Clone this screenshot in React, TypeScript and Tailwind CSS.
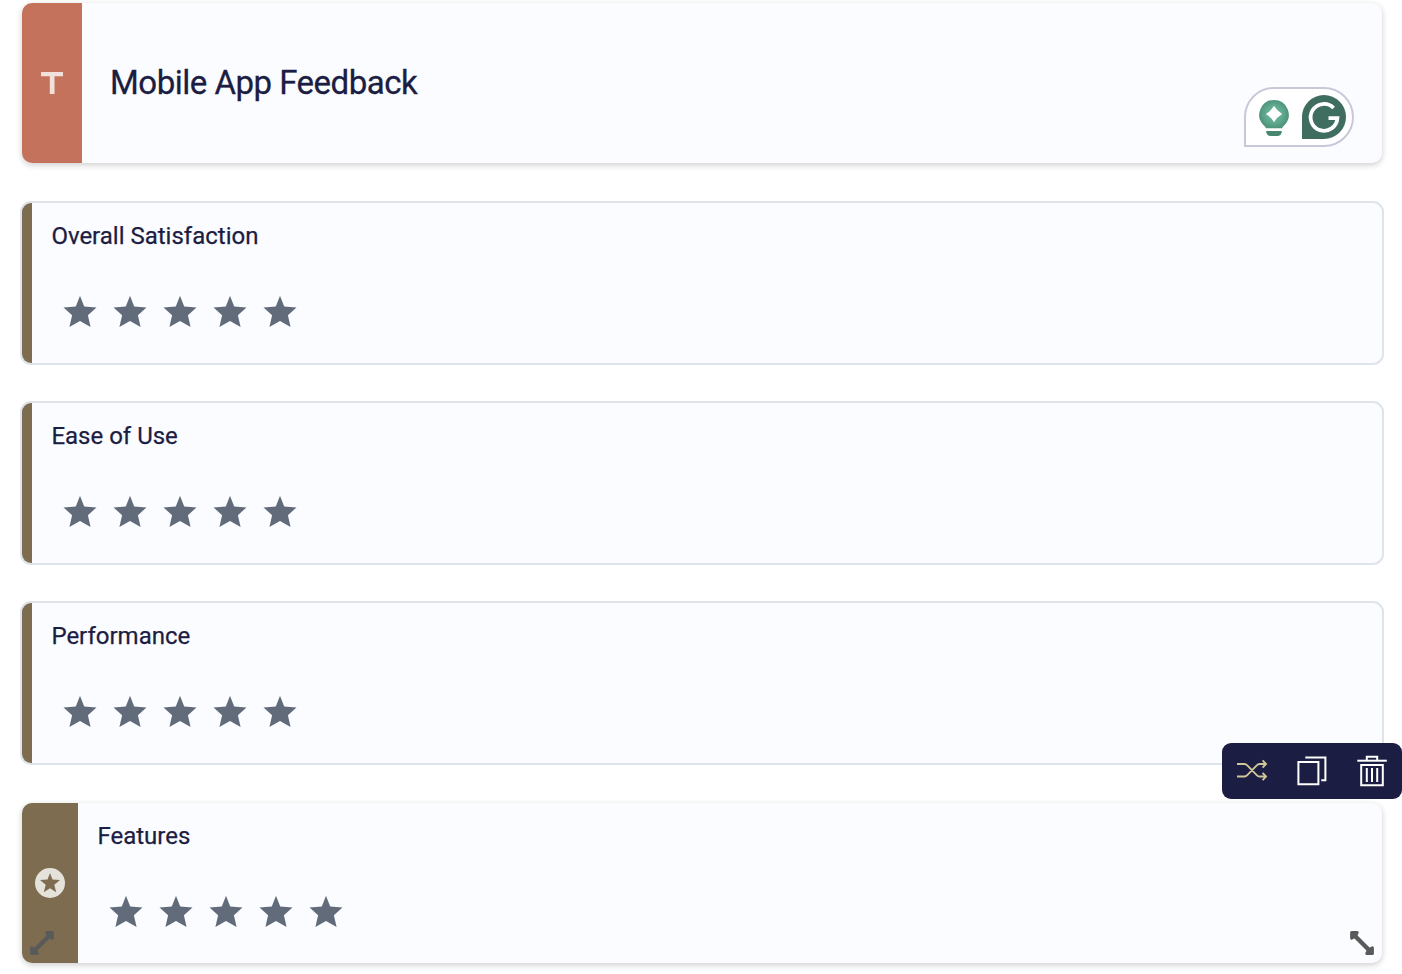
const fontStack = 'font-[Roboto,sans-serif]';

function Star() {
  return (
    <svg className="w-[34px] h-8" viewBox="0 0 34 32" fill="#616b7a">
      <path d="M17 -0.2 L21.2 10.6 L33.5 11.4 L24.9 19.3 L27.6 31 L17 24.9 L6.4 31 L9.1 19.3 L0.5 11.4 L12.8 10.6 Z" />
    </svg>
  );
}

function Stars() {
  return (
    <div className="flex gap-4">
      {[1, 2, 3, 4, 5].map((n) => (
        <Star key={n} />
      ))}
    </div>
  );
}

function Question({ label }: { label: string }) {
  return (
    <div className="pl-[19px] pt-[17px]">
      <p className="pl-[0.4px] text-2xl leading-8 text-[#1c1d42] [-webkit-text-stroke:0.25px_#1c1d42]">{label}</p>
      <div className="mt-11 ml-3">
        <Stars />
      </div>
    </div>
  );
}

function RatingCard({ label }: { label: string }) {
  return (
    <div className="h-[164px] w-[1364px] flex border-2 border-[#dfe3ea] rounded-[11px] bg-[#fbfcff] overflow-hidden">
      <div className="w-2.5 bg-[#7e6c50]" />
      <Question label={label} />
    </div>
  );
}

function AssistantBadge() {
  return (
    <div className="absolute left-[1222px] top-[84px] w-[110px] h-[60px] rounded-[30px] rounded-bl-none border-2 border-[#c9c8d8] bg-white">
      <svg className="w-full h-full" viewBox="0 0 106 56" fill="none">
        <defs>
          <radialGradient id="bulb" cx="50%" cy="50%" r="50%">
            <stop offset="0" stopColor="#6bbda0" />
            <stop offset="0.6" stopColor="#60aa8f" />
            <stop offset="1" stopColor="#4f947b" />
          </radialGradient>
        </defs>
        <path d="M28 11 A14.7 14.7 0 0 1 38.6 35.9 Q36.4 37.6 36 39.2 H20 Q19.6 37.6 17.4 35.9 A14.7 14.7 0 0 1 28 11 Z" fill="url(#bulb)" />
        <path d="M20.3 42 h15.4 v1.2 q-0.8 3.8 -4.2 3.8 h-7 q-3.4 0 -4.2 -3.8 Z" fill="#48866f" />
        <path d="M28 16.8 Q31 22 36.2 25 Q31 28 28 33.2 Q25 28 19.8 25 Q25 22 28 16.8 Z" fill="#fff" />
        <path d="M78 6 a22 22 0 0 1 0 44 H56 V28 A22 22 0 0 1 78 6 Z" fill="#3f6d60" />
        <path d="M87.6 19 A13.4 13.4 0 1 0 91.4 29.2 H82.5" stroke="#fff" strokeWidth="3.8" />
      </svg>
    </div>
  );
}

function Toolbar() {
  return (
    <div className="absolute left-[1222px] top-[743px] w-[180px] h-14 rounded-[9px] bg-[#1c1d42] flex items-center">
      <svg className="w-[60px] h-14" viewBox="0 0 60 56" fill="none" stroke="#cfc69a" strokeWidth="1.9">
        <path d="M15 21 H22.5 Q24 21.2 25 22.2 L35 32.3 Q36 33.4 37.5 33.5 H44 M15 33.5 H22.5 Q24 33.3 25 32.3 L35 22.2 Q36 21.1 37.5 21 H44" />
        <path d="M40.6 17.4 L44 21 L40.6 24.6 M40.6 29.9 L44 33.5 L40.6 37.1" />
      </svg>
      <svg className="w-[60px] h-14" viewBox="0 0 60 56" fill="none" stroke="#fff" strokeWidth="2">
        <path d="M16.4 19 H36.4 V41.2 H16.4 Z" />
        <path d="M23.3 14.6 H43.4 V37.2 H39.3" />
      </svg>
      <svg className="w-[60px] h-14" viewBox="0 0 60 56" fill="none" stroke="#fff" strokeWidth="2">
        <path d="M15.3 17.7 H44.8" />
        <path d="M24.8 17.5 V13.7 H35.2 V17.5" />
        <path d="M19.2 22 H40.8 V42.2 H19.2 Z" />
        <path d="M24.8 25 V39 M30 25 V39 M35.2 25 V39" />
      </svg>
    </div>
  );
}

function ResizeHandle({ className }: { className?: string }) {
  return (
    <svg className={className} width="24" height="24" viewBox="0 0 24 24" fill="#5a5a5a" stroke="#5a5a5a">
      <path d="M4 4 L20 20" strokeWidth="4.4" />
      <path d="M1.6 1.6 H7.2 L6 4 L4 6 L1.6 7.2 Z M22.4 22.4 H16.8 L18 20 L20 18 L22.4 16.8 Z" strokeWidth="3" strokeLinejoin="round" />
    </svg>
  );
}

export default function App() {
  return (
    <div className={`relative w-[1402px] h-[974px] overflow-hidden bg-white ${fontStack}`}>
      <main className="flex flex-col pt-[3px]">
        {/* Form title */}
        <div className="relative ml-[22px] w-[1360px] h-40 flex rounded-[10px] bg-[#fbfcff] shadow-[0_2px_6px_rgba(0,0,0,0.2)]">
          <div className="w-[60px] rounded-l-[10px] bg-[#c4725b] flex items-center justify-center">
            <svg width="22" height="22" viewBox="0 0 22 22" fill="#f2e1da">
              <path d="M0 0 H22 V4.3 H13.5 V22 H8.8 V4.3 H0 Z" />
            </svg>
          </div>
          <h1 className="pl-7 self-center text-[33px] leading-10 tracking-[-0.5px] text-[#1c1d42] [-webkit-text-stroke:0.3px_#1c1d42]">
            Mobile App Feedback
          </h1>
          <AssistantBadge />
        </div>

        {/* Rating questions */}
        <div className="mt-[38px] ml-5 flex flex-col gap-9">
          <RatingCard label="Overall Satisfaction" />
          <RatingCard label="Ease of Use" />
          <RatingCard label="Performance" />
        </div>

        {/* Selected question */}
        <div className="relative mt-[38px] ml-[22px] w-[1360px] h-40 flex rounded-[10px] bg-[#fbfcff] shadow-[0_2px_6px_rgba(0,0,0,0.2)]">
          <div className="w-14 rounded-l-[10px] bg-[#7e6c50] flex items-center justify-center">
            <svg width="30" height="30" viewBox="0 0 30 30">
              <circle cx="15" cy="15" r="15" fill="#e5e2dc" />
              <path d="M15 5 L17.5 11.4 L25 12 L19.3 16.8 L21.2 24.2 L15 20.2 L8.8 24.2 L10.7 16.8 L5 12 L12.5 11.4 Z" fill="#7e6c50" />
            </svg>
          </div>
          <Question label="Features" />
          <ResizeHandle className="absolute left-2 bottom-2 -scale-x-100" />
          <ResizeHandle className="absolute right-2 bottom-2" />
        </div>
      </main>

      <Toolbar />
    </div>
  );
}
